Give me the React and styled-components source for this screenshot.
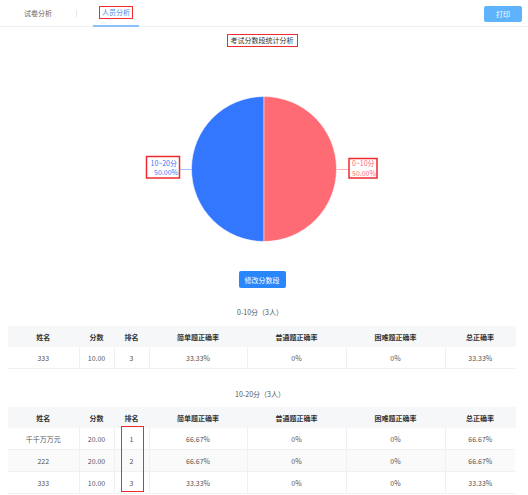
import React from "react";
import styled, { createGlobalStyle } from "styled-components";

const GlobalStyle = createGlobalStyle`
  body {
    margin: 0;
    background: #fff;
    font-family: "Noto Sans CJK SC", "Noto Sans", sans-serif;
    font-size: 7px;
    color: #555;
  }
`;

const Header = styled.div`
  height: 26px;
  border-bottom: 1px solid #eff0f2;
  display: flex;
  align-items: stretch;
  padding: 0 6px 0 16px;
`;

const Tab = styled.div`
  padding: 0 8px;
  display: flex;
  align-items: center;
  color: ${(p) => (p.active ? "#3b8eef" : "#666")};
  border-bottom: 2px solid ${(p) => (p.active ? "#8cc0fb" : "transparent")};
  margin-bottom: -1px;
`;

const TabDivider = styled.div`
  width: 1px;
  height: 7px;
  background: #e4e6ea;
  margin: 10px 16px 0;
`;

const Mark = styled.span`
  outline: 1.5px solid #ee2a2e;
  outline-offset: 1px;
  padding: 0 1px;
  line-height: 9px;
`;

const Spacer = styled.div`
  flex: 1;
`;

const PrintButton = styled.button`
  align-self: flex-start;
  margin-top: 6px;
  width: 38px;
  height: 16px;
  border: none;
  border-radius: 2px;
  background: #5fb3fd;
  color: #fff;
  font-family: inherit;
  font-size: 7px;
  padding: 0;
`;

const Title = styled.div`
  display: flex;
  justify-content: center;
  padding-top: 7px;
  margin-left: -4px;
`;

const TitleText = styled.span`
  border: 1.5px solid #ee2a2e;
  padding: 0 3px;
  line-height: 11px;
  color: #333;
`;

const Chart = styled.svg`
  display: block;
  width: 528px;
  height: 224px;
  font-family: "Noto Sans CJK SC", "Noto Sans", sans-serif;
  font-size: 7px;
`;

const ButtonRow = styled.div`
  display: flex;
  justify-content: center;
  margin-left: -4px;
`;

const EditButton = styled.button`
  width: 47px;
  height: 17px;
  border: none;
  border-radius: 2px;
  background: #2a86fb;
  color: #fff;
  font-family: inherit;
  font-size: 7px;
  padding: 0;
`;

const Section = styled.div`
  padding: 0 13px 0 8px;
`;

const SectionTitle = styled.div`
  text-align: center;
  line-height: 14px;
  margin: ${(p) => (p.first ? "17px 0 7px" : "18px 0 6px")};
  color: #555;
  padding-right: 3px;
`;

const TableWrap = styled.div`
  position: relative;
`;

const Table = styled.table`
  width: 507px;
  border-collapse: collapse;
  table-layout: fixed;
`;

const Th = styled.th`
  height: 21px;
  padding: 0;
  background: #f6f7f9;
  color: #333;
  font-weight: bold;
  text-align: center;
  border-right: 1px solid #f6f7f9;
`;

const Td = styled.td`
  height: 21px;
  padding: 0;
  text-align: center;
  color: #555;
  border-right: 1px solid #eef0f3;
  border-bottom: 1px solid #eef0f3;
  &:last-child {
    border-right: none;
  }
`;

const Tr = styled.tr`
  background: ${(p) => (p.striped ? "#fafafa" : "#fff")};
`;

const RankMark = styled.div`
  position: absolute;
  left: 113px;
  top: 19px;
  width: 23px;
  height: 66px;
  border: 1.5px solid #ee2a2e;
  box-sizing: border-box;
  pointer-events: none;
`;

const columns = [
  { title: "姓名", width: 71 },
  { title: "分数", width: 35 },
  { title: "排名", width: 35 },
  { title: "简单题正确率", width: 98 },
  { title: "普通题正确率", width: 99 },
  { title: "困难题正确率", width: 99 },
  { title: "总正确率", width: 70 },
];

const groups = [
  {
    label: "0-10分（3人）",
    rows: [["333", "10.00", "3", "33.33%", "0%", "0%", "33.33%"]],
  },
  {
    label: "10-20分（3人）",
    rows: [
      ["千千万万元", "20.00", "1", "66.67%", "0%", "0%", "66.67%"],
      ["222", "20.00", "2", "66.67%", "0%", "0%", "66.67%"],
      ["333", "10.00", "3", "33.33%", "0%", "0%", "33.33%"],
    ],
    marked: true,
  },
];

const PieChart = () => {
  const cx = 264;
  const cy = 122;
  const r = 72.5;
  return (
    <Chart viewBox="0 0 528 224">
      <path
        d={`M${cx} ${cy} L${cx} ${cy - r} A${r} ${r} 0 0 0 ${cx} ${cy + r} Z`}
        fill="#3377ff"
        stroke="#fff"
        strokeWidth="0.5"
      />
      <path
        d={`M${cx} ${cy} L${cx} ${cy - r} A${r} ${r} 0 0 1 ${cx} ${cy + r} Z`}
        fill="#ff6b75"
        stroke="#fff"
        strokeWidth="0.5"
      />
      <line x1="180" y1="122.5" x2="192" y2="122.5" stroke="#9fc0ff" strokeWidth="1" />
      <line x1="336.5" y1="122.5" x2="349" y2="122.5" stroke="#ffb0b5" strokeWidth="1" />

      <rect x="146.5" y="109.5" width="33" height="21.5" fill="none" stroke="#ee2a2e" strokeWidth="1.5" />
      <text x="177" y="118.5" textAnchor="end" fill="#3377ff">10~20分</text>
      <text x="178" y="128" textAnchor="end" fill="#3377ff">50.00%</text>

      <rect x="349" y="111.5" width="28" height="19.5" fill="none" stroke="#ee2a2e" strokeWidth="1.5" />
      <text x="352" y="119" fill="#ff6b75">0~10分</text>
      <text x="352" y="128.5" fill="#ff6b75">50.00%</text>
    </Chart>
  );
};

const App = () => (
  <>
    <GlobalStyle />
    <Header>
      <Tab>试卷分析</Tab>
      <TabDivider />
      <Tab active>
        <Mark>人员分析</Mark>
      </Tab>
      <Spacer />
      <PrintButton>打印</PrintButton>
    </Header>

    <Title>
      <TitleText>考试分数段统计分析</TitleText>
    </Title>

    <PieChart />

    <ButtonRow>
      <EditButton>修改分数段</EditButton>
    </ButtonRow>

    {groups.map((g, gi) => (
      <Section key={g.label}>
        <SectionTitle first={gi === 0}>{g.label}</SectionTitle>
        <TableWrap>
          <Table>
            <colgroup>
              {columns.map((c) => (
                <col key={c.title} style={{ width: c.width }} />
              ))}
            </colgroup>
            <thead>
              <tr>
                {columns.map((c) => (
                  <Th key={c.title}>{c.title}</Th>
                ))}
              </tr>
            </thead>
            <tbody>
              {g.rows.map((row, ri) => (
                <Tr key={ri} striped={ri % 2 === 1}>
                  {row.map((cell, ci) => (
                    <Td key={ci}>{cell}</Td>
                  ))}
                </Tr>
              ))}
            </tbody>
          </Table>
          {g.marked && <RankMark />}
        </TableWrap>
      </Section>
    ))}
  </>
);

export default App;
